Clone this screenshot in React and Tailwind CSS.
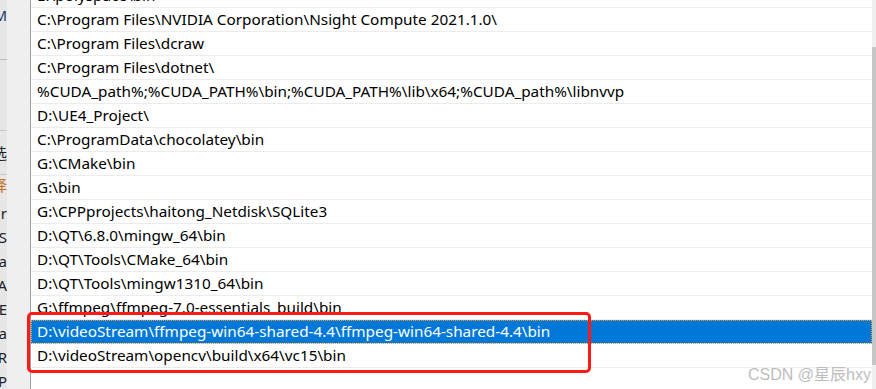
import React from "react";

const rows = [
  "E:\\polyspace\\bin",
  "C:\\Program Files\\NVIDIA Corporation\\Nsight Compute 2021.1.0\\",
  "C:\\Program Files\\dcraw",
  "C:\\Program Files\\dotnet\\",
  "%CUDA_path%;%CUDA_PATH%\\bin;%CUDA_PATH%\\lib\\x64;%CUDA_path%\\libnvvp",
  "D:\\UE4_Project\\",
  "C:\\ProgramData\\chocolatey\\bin",
  "G:\\CMake\\bin",
  "G:\\bin",
  "G:\\CPPprojects\\haitong_Netdisk\\SQLite3",
  "D:\\QT\\6.8.0\\mingw_64\\bin",
  "D:\\QT\\Tools\\CMake_64\\bin",
  "D:\\QT\\Tools\\mingw1310_64\\bin",
  "G:\\ffmpeg\\ffmpeg-7.0-essentials_build\\bin",
  "D:\\videoStream\\ffmpeg-win64-shared-4.4\\ffmpeg-win64-shared-4.4\\bin",
  "D:\\videoStream\\opencv\\build\\x64\\vc15\\bin",
];

const leftFrags = [
  { t: "M", y: 6, c: "text-[#1a3a6a]" },
  { t: "选", y: 144, c: "text-[#222]" },
  { t: "择", y: 176, c: "text-[#c07020]" },
  { t: "r", y: 204, c: "text-[#222]" },
  { t: "S", y: 228, c: "text-[#222]" },
  { t: "a", y: 252, c: "text-[#222]" },
  { t: "A", y: 276, c: "text-[#222]" },
  { t: "E", y: 300, c: "text-[#222]" },
  { t: "la", y: 324, c: "text-[#222]" },
  { t: "R", y: 348, c: "text-[#222]" },
  { t: "P", y: 372, c: "text-[#222]" },
];

export default function App() {
  return (
    <div
      className="relative w-[876px] h-[389px] overflow-hidden bg-white flex"
      style={{ fontFamily: '"Noto Sans", "Open Sans", "Noto Sans CJK SC", sans-serif' }}
    >
      {/* left strip */}
      <div className="relative w-[30px] h-full bg-[#f0f0f0] flex">
        <div className="w-[7px] h-full bg-[#e6e6e6] relative overflow-hidden">
          <div className="absolute left-0 top-[59px] w-full h-px bg-[#bdbdbd]" />
          <div className="absolute left-0 top-[130px] w-full h-px bg-[#c8c8c8]" />
          <div className="absolute left-0 top-[174px] w-full h-px bg-[#c8c8c8]" />
          {leftFrags.map((f, i) => (
            <div
              key={i}
              className={`absolute right-0 text-[15px] leading-[18px] whitespace-nowrap ${f.c}`}
              style={{ top: f.y }}
            >
              {f.t}
            </div>
          ))}
        </div>
      </div>
      <div className="w-px h-full bg-[#a0a0a0]" />
      {/* list */}
      <div className="flex-1 h-full overflow-hidden">
        <div className="-mt-[16px] flex flex-col">
          {rows.map((r, i) => {
            const sel = i === 14;
            return (
              <div
                key={i}
                className={
                  "h-[24px] pl-[6px] flex items-center whitespace-nowrap text-[15.3px] border-b " +
                  (sel
                    ? "bg-[#0078d7] text-white border-b-[#e6e6e6] outline outline-1 outline-dotted outline-[#f0a030] -outline-offset-1"
                    : "text-black border-b-[#ececec]")
                }
              >
                <span>{r}</span>
              </div>
            );
          })}
        </div>
      </div>
      {/* scrollbar */}
      <div className="w-[4px] h-full bg-[#f0f0f0] flex flex-col">
        <div className="h-[47px]" />
        <div className="h-[318px] bg-[#c6c6c6]" />
      </div>

      {/* red annotation box */}
      <div className="absolute left-[27px] top-[312px] w-[564px] h-[61px] border-[3px] border-[#ff1a1a] rounded-[5px]" />

      {/* watermark */}
      <div
        className="absolute right-[5px] bottom-[5px] text-[16px] leading-[18px] text-[#bdbdbd] whitespace-nowrap"
        style={{ fontFamily: '"Liberation Sans", "Noto Sans CJK SC", sans-serif' }}
      >
        CSDN @星辰hxy
      </div>
    </div>
  );
}
